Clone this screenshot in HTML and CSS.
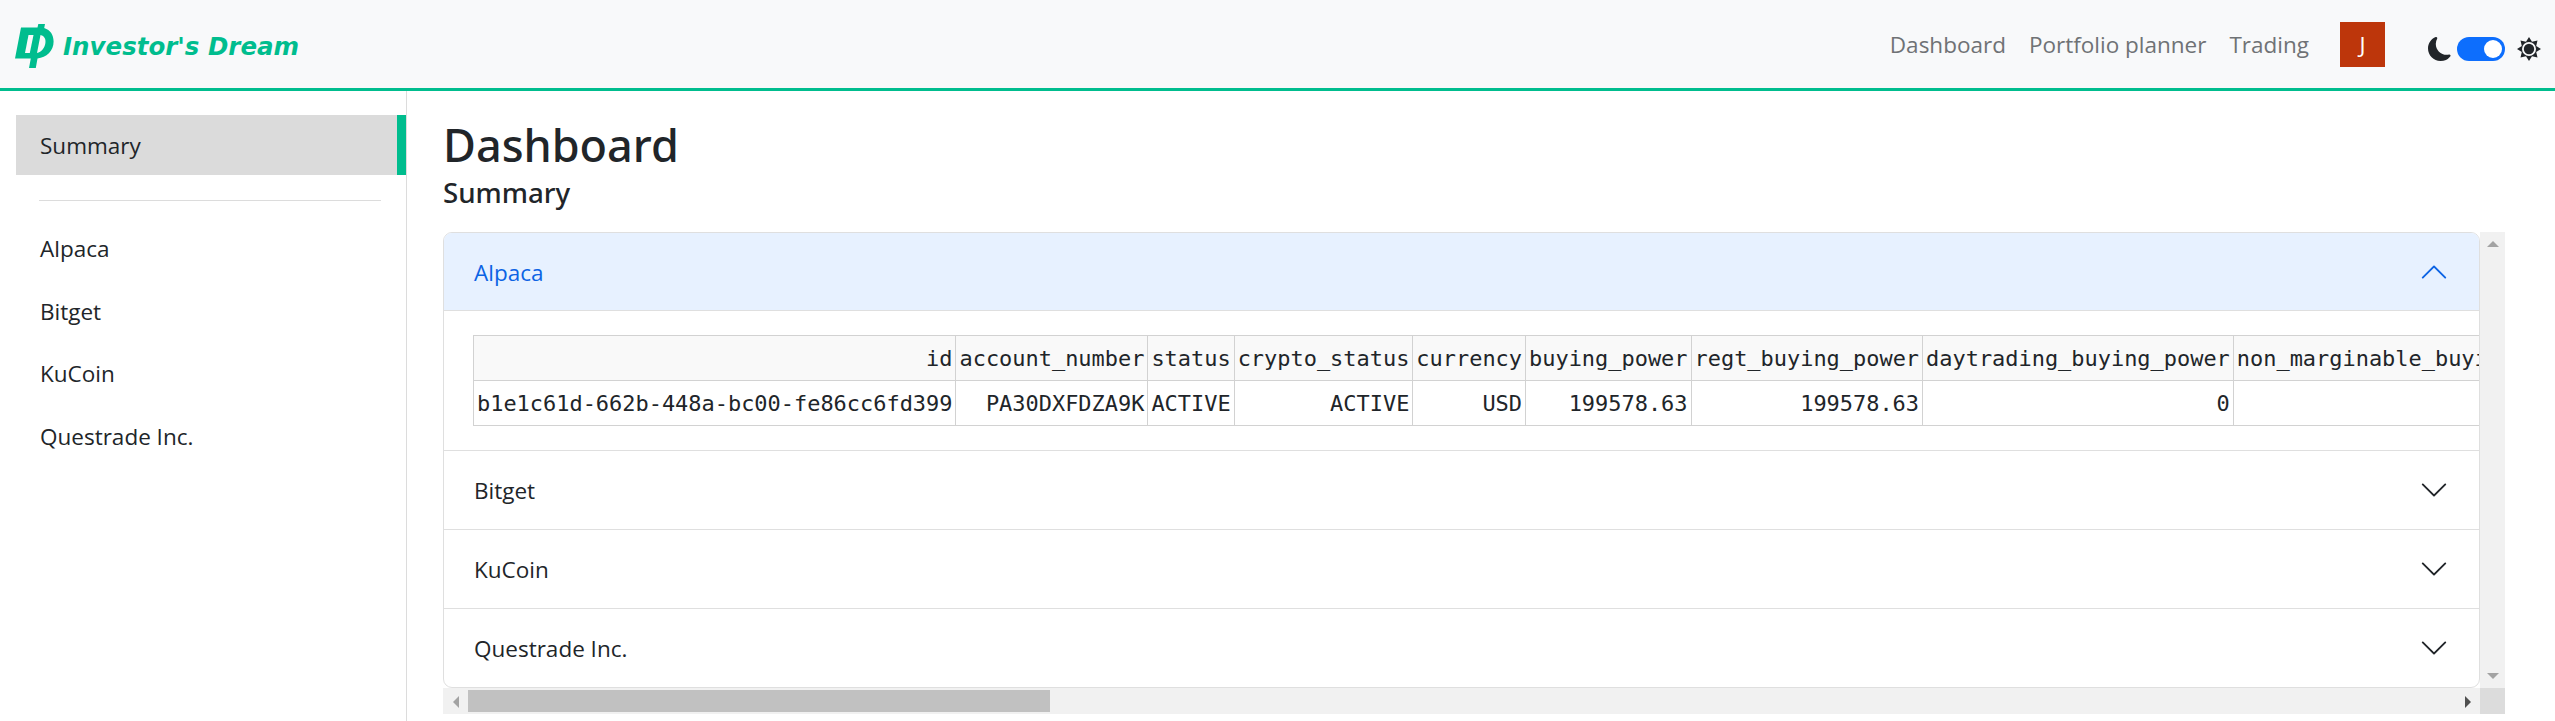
FILE: index.html
```html
<!DOCTYPE html>
<html lang="en">
<head>
    <meta charset="UTF-8">
    <meta name="viewport" content="width=device-width, initial-scale=1.0">
    <title>Investor's Dream</title>
    <link rel="stylesheet" href="styles.css">
</head>
<body>
    <nav class="navbar">
        <a class="brand" href="#">
            <svg class="brand-logo" viewBox="5 8 40 46" width="40" height="46">
                <path fill="#00bd8e" d="M11 12.5 L27.5 12.5 L28.3 9 L35 9 L34.2 13 C40.5 15 43.6 20 43.6 26.5 C43.6 36 36.5 42.5 27.5 43.5 L25.8 53 L19 53 L20.8 43.5 L5 43.5 Z"/>
                <path fill="#f8f9fa" d="M18.5 20 L23.5 20 L19.8 38 L15 38 Z"/>
                <path fill="#f8f9fa" d="M30.5 20 C34.5 21 36 24 35.4 28 C34.8 33 31.5 37 27 38 Z"/>
            </svg>
            <span class="brand-name">Investor's Dream</span>
        </a>
        <div class="nav-links">
            <a class="nav-link" href="#">Dashboard</a>
            <a class="nav-link" href="#">Portfolio planner</a>
            <a class="nav-link" href="#">Trading</a>
        </div>
        <div class="avatar">J</div>
        <div class="theme-switch">
            <svg class="moon" viewBox="0 0 16 16" width="24" height="24">
                <path fill="#212529" d="M6 .278a.768.768 0 0 1 .08.858 7.208 7.208 0 0 0-.878 3.46c0 4.021 3.278 7.277 7.318 7.277.527 0 1.04-.055 1.533-.16a.787.787 0 0 1 .81.316.733.733 0 0 1-.031.893A8.349 8.349 0 0 1 8.344 16C3.734 16 0 12.286 0 7.71 0 4.266 2.114 1.312 5.124.06A.752.752 0 0 1 6 .278z"/>
            </svg>
            <div class="toggle"><span class="knob"></span></div>
            <svg class="sun" viewBox="0 0 24 24" width="24" height="24">
                <path fill="#212529" d="M12 0 L15 4.8 L20.5 3.5 L19.2 9 L24 12 L19.2 15 L20.5 20.5 L15 19.2 L12 24 L9 19.2 L3.5 20.5 L4.8 15 L0 12 L4.8 9 L3.5 3.5 L9 4.8 Z"/>
                <circle cx="12" cy="12" r="7" fill="#f8f9fa"/>
                <circle cx="12" cy="12" r="5.2" fill="#212529"/>
            </svg>
        </div>
    </nav>

    <div class="page">
        <aside class="sidebar">
            <a class="side-item active" href="#">Summary</a>
            <hr class="side-divider">
            <a class="side-item" href="#">Alpaca</a>
            <a class="side-item" href="#">Bitget</a>
            <a class="side-item" href="#">KuCoin</a>
            <a class="side-item" href="#">Questrade Inc.</a>
        </aside>

        <main class="content">
            <h1 class="page-title">Dashboard</h1>
            <h5 class="page-subtitle">Summary</h5>

            <div class="scroll-frame">
                <div class="accordion">
                    <div class="acc-item">
                        <div class="acc-header open">
                            <span>Alpaca</span>
                            <svg viewBox="0 0 16 16" width="30" height="30" class="chevron up">
                                <path fill="currentColor" d="M1.646 4.646a.5.5 0 0 1 .708 0L8 10.293l5.646-5.647a.5.5 0 0 1 .708.708l-6 6a.5.5 0 0 1-.708 0l-6-6a.5.5 0 0 1 0-.708z"/>
                            </svg>
                        </div>
                        <div class="acc-body">
                            <table class="data-table">
                                <thead>
                                    <tr>
                                        <th>id</th>
                                        <th>account_number</th>
                                        <th>status</th>
                                        <th>crypto_status</th>
                                        <th>currency</th>
                                        <th>buying_power</th>
                                        <th>regt_buying_power</th>
                                        <th>daytrading_buying_power</th>
                                        <th>non_marginable_buying_power</th>
                                    </tr>
                                </thead>
                                <tbody>
                                    <tr>
                                        <td>b1e1c61d-662b-448a-bc00-fe86cc6fd399</td>
                                        <td>PA30DXFDZA9K</td>
                                        <td>ACTIVE</td>
                                        <td>ACTIVE</td>
                                        <td>USD</td>
                                        <td>199578.63</td>
                                        <td>199578.63</td>
                                        <td>0</td>
                                        <td>0</td>
                                    </tr>
                                </tbody>
                            </table>
                        </div>
                    </div>
                    <div class="acc-item">
                        <div class="acc-header">
                            <span>Bitget</span>
                            <svg viewBox="0 0 16 16" width="30" height="30" class="chevron">
                                <path fill="currentColor" d="M1.646 4.646a.5.5 0 0 1 .708 0L8 10.293l5.646-5.647a.5.5 0 0 1 .708.708l-6 6a.5.5 0 0 1-.708 0l-6-6a.5.5 0 0 1 0-.708z"/>
                            </svg>
                        </div>
                    </div>
                    <div class="acc-item">
                        <div class="acc-header">
                            <span>KuCoin</span>
                            <svg viewBox="0 0 16 16" width="30" height="30" class="chevron">
                                <path fill="currentColor" d="M1.646 4.646a.5.5 0 0 1 .708 0L8 10.293l5.646-5.647a.5.5 0 0 1 .708.708l-6 6a.5.5 0 0 1-.708 0l-6-6a.5.5 0 0 1 0-.708z"/>
                            </svg>
                        </div>
                    </div>
                    <div class="acc-item">
                        <div class="acc-header">
                            <span>Questrade Inc.</span>
                            <svg viewBox="0 0 16 16" width="30" height="30" class="chevron">
                                <path fill="currentColor" d="M1.646 4.646a.5.5 0 0 1 .708 0L8 10.293l5.646-5.647a.5.5 0 0 1 .708.708l-6 6a.5.5 0 0 1-.708 0l-6-6a.5.5 0 0 1 0-.708z"/>
                            </svg>
                        </div>
                    </div>
                </div>

                <div class="vbar">
                    <span class="arrow arrow-up"></span>
                    <span class="arrow arrow-down"></span>
                </div>
                <div class="hbar">
                    <div class="hbar-btn"><span class="arrow arrow-left"></span></div>
                    <div class="hbar-thumb"></div>
                    <div class="hbar-btn"><span class="arrow arrow-right"></span></div>
                </div>
                <div class="corner"></div>
            </div>
        </main>
    </div>
</body>
</html>
```

FILE: styles.css
```css
* {
    box-sizing: border-box;
}
html, body {
    height: 100%;
}
body {
    margin: 0;
    overflow: hidden;
    font-family: 'Open Sans', 'Noto Sans', sans-serif;
    font-size: 22.5px;
    color: #212529;
    background: #fff;
    display: flex;
    flex-direction: column;
}
a {
    color: inherit;
    text-decoration: none;
}

/* top bar */
.navbar {
    flex: none;
    height: 91px;
    display: flex;
    align-items: center;
    padding: 0 14px 0 15px;
    background: #f8f9fa;
    border-bottom: 3px solid #00bd8e;
}
.brand {
    display: flex;
    align-items: center;
    margin-right: auto;
}
.brand-logo {
    margin-top: 4px;
}
.brand-name {
    margin-left: 8px;
    margin-top: 5px;
    font-family: 'DejaVu Sans', sans-serif;
    font-size: 24.5px;
    font-weight: bold;
    font-style: italic;
    color: #00bd8e;
}
.nav-links {
    display: flex;
    gap: 23px;
}
.nav-link {
    color: #6f7275;
}
.avatar {
    width: 45px;
    height: 45px;
    margin-left: 31px;
    display: flex;
    align-items: center;
    justify-content: center;
    background: #bd360b;
    color: #fff;
}
.theme-switch {
    display: flex;
    align-items: center;
    margin-left: 43px;
    margin-top: 10px;
}
.moon {
    margin-right: 5px;
}
.toggle {
    width: 48px;
    height: 24px;
    display: flex;
    align-items: center;
    justify-content: flex-end;
    padding-right: 3px;
    border-radius: 12px;
    background: #0d6efd;
}
.knob {
    width: 18px;
    height: 18px;
    border-radius: 50%;
    background: #fff;
}
.sun {
    margin-left: 12px;
}

/* sidebar + content */
.page {
    flex: 1;
    min-height: 0;
    display: flex;
}
.sidebar {
    flex: none;
    width: 407px;
    padding-top: 24px;
    border-right: 1px solid #dcdcdc;
}
.side-item {
    display: flex;
    align-items: center;
    height: 62.7px;
    padding-left: 40px;
}
.side-item.active {
    height: 60px;
    margin-left: 16px;
    padding-left: 24px;
    background: #dbdbdb;
    border-right: 9px solid #00bd8e;
}
.side-divider {
    height: 1px;
    margin: 25px 25px 16px 39px;
    border: 0;
    background: #dcdcdc;
}
.content {
    flex: 1;
    min-width: 0;
    padding: 24px 50px 7px 36px;
    display: flex;
    flex-direction: column;
}
.page-title {
    margin: 0;
    font-family: 'Noto Sans', sans-serif;
    font-size: 45px;
    font-weight: 500;
    line-height: 60px;
}
.page-subtitle {
    margin: 0 0 23px;
    font-family: 'Noto Sans', sans-serif;
    font-size: 27.7px;
    font-weight: 500;
    line-height: 34px;
}

/* fake scrollbars around the accordion, same as the screenshot */
.scroll-frame {
    flex: 1;
    min-height: 0;
    display: grid;
    grid-template-columns: minmax(0, 1fr) 25px;
    grid-template-rows: minmax(0, 1fr) 26px;
}
.accordion {
    overflow: hidden;
    border: 1px solid #dfdfdf;
    border-radius: 9px;
}
.acc-item + .acc-item {
    border-top: 1px solid #dfdfdf;
}
.acc-header {
    height: 78px;
    display: flex;
    align-items: center;
    justify-content: space-between;
    padding: 0 30px;
}
.acc-header.open {
    background: #e7f1ff;
    color: #0c63e4;
    box-shadow: inset 0 -1px 0 #dfdfdf;
}
.chevron.up {
    transform: rotate(180deg);
}
.acc-body {
    padding: 24px 0 24px 29px;
}
.data-table {
    border-collapse: collapse;
    white-space: nowrap;
    font-family: 'DejaVu Sans Mono', monospace;
    font-size: 21.95px;
}
.data-table th, .data-table td {
    height: 45px;
    padding: 0 3px;
    border: 1px solid #d2d2d2;
    font-weight: normal;
    text-align: right;
}
.data-table th {
    background: #f9f9f9;
}
.vbar {
    display: flex;
    flex-direction: column;
    justify-content: space-between;
    align-items: center;
    padding: 9px 0;
    background: #f1f1f1;
}
.hbar {
    display: flex;
    background: #f1f1f1;
    padding-top: 2px;
}
.hbar-btn {
    width: 25px;
    display: flex;
    align-items: center;
    justify-content: center;
}
.hbar-thumb {
    width: 582px;
    margin-right: auto;
    margin-bottom: 2px;
    background: #c1c1c1;
}
.corner {
    background: #dcdcdc;
}
.arrow {
    width: 0;
    height: 0;
    border: 6px solid transparent;
}
.arrow-up {
    border-top: 0;
    border-bottom: 6px solid #a3a3a3;
}
.arrow-down {
    border-bottom: 0;
    border-top: 6px solid #a3a3a3;
}
.arrow-left {
    border-left: 0;
    border-right: 6px solid #a3a3a3;
}
.arrow-right {
    border-right: 0;
    border-left: 6px solid #505050;
}
```
